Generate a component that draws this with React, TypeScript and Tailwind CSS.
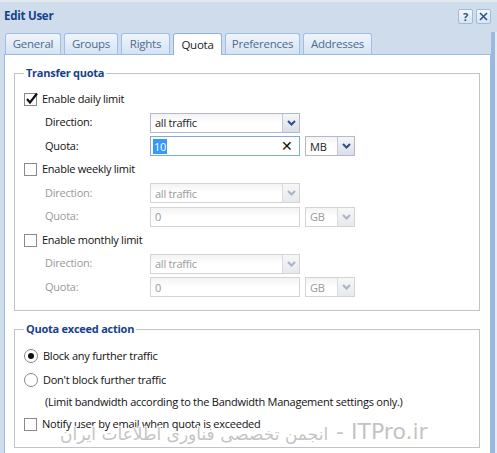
import React from "react";

const Chevron = ({ disabled }: { disabled?: boolean }) => (
  <svg width="9" height="6" viewBox="0 0 9 6">
    <path d="M1 1 L4.5 4.5 L8 1" fill="none" stroke={disabled ? "#a9b3c6" : "#2f4f86"} strokeWidth="2" />
  </svg>
);

const Trigger = ({ disabled }: { disabled?: boolean }) => (
  <div className={`w-[17px] h-full flex items-center justify-center border-l ${disabled ? "border-[#dcdcdc] bg-gradient-to-b from-[#f7f7f7] to-[#e6e9ee]" : "border-[#c4c7cf] bg-gradient-to-b from-[#f4f6fa] to-[#d9dfe8]"}`}>
    <Chevron disabled={disabled} />
  </div>
);

const Select = ({ value, w, disabled }: { value: string; w: string; disabled?: boolean }) => (
  <div className={`${w} h-[20px] flex border ${disabled ? "border-[#d4d4d4] text-[#9a9a9a]" : "border-[#b5b8c8] text-[#222]"} bg-gradient-to-b from-[#f3f3f3] via-white to-white`}>
    <div className="flex-1 flex items-center pl-[4px] leading-none">{value}</div>
    <Trigger disabled={disabled} />
  </div>
);

const Input = ({ value, w, disabled }: { value: string; w: string; disabled?: boolean }) => (
  <div className={`${w} h-[20px] flex items-center border ${disabled ? "border-[#d4d4d4] text-[#9a9a9a]" : "border-[#b5b8c8]"} bg-gradient-to-b from-[#f3f3f3] via-white to-white pl-[4px] leading-none`}>
    {value}
  </div>
);

const Checkbox = ({ checked }: { checked?: boolean }) => (
  <span className="relative inline-block w-[13px] h-[13px] border border-[#8a8a8a] bg-white shrink-0">
    {checked && (
      <svg className="absolute left-[0px] top-[-2px]" width="14" height="14" viewBox="0 0 14 14">
        <path d="M2 7 L5 10.5 L12 1.5" fill="none" stroke="#111" strokeWidth="2.2" />
      </svg>
    )}
  </span>
);

const Radio = ({ checked }: { checked?: boolean }) => (
  <span className="inline-flex items-center justify-center w-[14px] h-[14px] rounded-full border border-[#8a8a8a] bg-white shrink-0">
    {checked && <span className="w-[6px] h-[6px] rounded-full bg-[#111]" />}
  </span>
);

const CheckRow = ({ label, checked }: { label: string; checked?: boolean }) => (
  <div className="h-[20px] flex items-center gap-[5px] text-[#111]">
    <Checkbox checked={checked} />
    <span>{label}</span>
  </div>
);

const FieldRow = ({ label, disabled, children }: { label: string; disabled?: boolean; children: React.ReactNode }) => (
  <div className={`h-[20px] flex items-center ${disabled ? "text-[#9a9a9a]" : "text-[#111]"}`}>
    <div className="w-[126px] pl-[21px]">{label}</div>
    {children}
  </div>
);

const Limit = ({ label, checked, unit }: { label: string; checked?: boolean; unit: string }) => {
  const dis = !checked;
  return (
    <>
      <CheckRow label={label} checked={checked} />
      <FieldRow label="Direction:" disabled={dis}>
        <Select value="all traffic" w="w-[150px]" disabled={dis} />
      </FieldRow>
      <FieldRow label="Quota:" disabled={dis}>
        {checked ? (
          <div className="w-[150px] h-[20px] flex items-center border border-[#7eadd9] bg-white pl-[2px] pr-[6px] leading-none">
            <span className="bg-[#3399ff] text-white px-[1px] py-[2px]">10</span>
            <span className="ml-auto text-[14px] text-[#111]">✕</span>
          </div>
        ) : (
          <Input value="0" w="w-[150px]" disabled />
        )}
        <div className="ml-[5px]">
          <Select value={unit} w="w-[50px]" disabled={dis} />
        </div>
      </FieldRow>
    </>
  );
};

const tabs = [
  { t: "General", w: "w-[56px]" },
  { t: "Groups", w: "w-[54px]" },
  { t: "Rights", w: "w-[49px]" },
  { t: "Quota", w: "w-[49px]", active: true },
  { t: "Preferences", w: "w-[75px]" },
  { t: "Addresses", w: "w-[69px]" },
];

export default function App() {
  return (
    <div className="relative w-[497px] h-[453px] overflow-hidden bg-[#cfdcec] font-['Open_Sans',sans-serif] text-[11px] tracking-[-0.25px] flex flex-col">
      <div className="h-[2px] bg-[#e3e8ee] shrink-0" />
      <div className="h-[30px] flex items-center justify-between pl-[4px] pr-[6px] shrink-0">
        <span className="font-bold text-[#15428b] text-[11.5px] mt-[-2px]">Edit User</span>
        <div className="flex gap-[3px] mt-[-2px]">
          <span className="w-[15px] h-[15px] rounded-[2px] border border-[#9fbbe0] bg-gradient-to-b from-[#f5f8fc] to-[#d8e4f3] flex items-center justify-center text-[#2f5188] font-bold text-[11px] leading-none">?</span>
          <span className="w-[15px] h-[15px] rounded-[2px] border border-[#9fbbe0] bg-gradient-to-b from-[#f5f8fc] to-[#d8e4f3] flex items-center justify-center">
            <svg width="9" height="9" viewBox="0 0 9 9"><path d="M1 1 L8 8 M8 1 L1 8" stroke="#2f5188" strokeWidth="1.6" /></svg>
          </span>
        </div>
      </div>
      <div className="flex flex-1 min-h-0">
        <div className="w-[491px] flex flex-col pl-[4px]">
          <div className="flex gap-[3px] pl-[1px] h-[22px] items-end shrink-0">
            {tabs.map((tab) =>
              tab.active ? (
                <div key={tab.t} className={`${tab.w} h-[22px] mb-[-1px] relative z-10 rounded-t-[3px] border border-b-0 border-[#8db2e3] bg-white flex items-center justify-center text-[#222] text-[11.5px]`}>
                  {tab.t}
                </div>
              ) : (
                <div key={tab.t} className={`${tab.w} h-[21px] rounded-t-[3px] border border-b-0 border-[#9fbde6] bg-gradient-to-b from-[#f0f5fb] to-[#d6e3f3] flex items-center justify-center text-[#4e6a91] text-[11.5px]`}>
                  {tab.t}
                </div>
              )
            )}
          </div>
          <div className="flex-1 bg-white border border-b-0 border-[#99bbe8] pt-[10px] pl-[9px] pr-[10px]">
            <fieldset className="border border-[#c0c3cc] px-[9px] pb-[13px]">
              <legend className="ml-[0px] px-[2px] font-bold text-[#15428b] leading-[16px]">Transfer quota</legend>
              <div className="pt-[8px] flex flex-col gap-[3.5px]">
                <Limit label="Enable daily limit" checked unit="MB" />
                <Limit label="Enable weekly limit" unit="GB" />
                <Limit label="Enable monthly limit" unit="GB" />
              </div>
            </fieldset>
            <fieldset className="mt-[10px] border border-[#c0c3cc] px-[9px] pb-[13px]">
              <legend className="px-[2px] font-bold text-[#15428b] leading-[16px]">Quota exceed action</legend>
              <div className="pt-[9px] flex flex-col text-[#111]">
                <div className="h-[20px] flex items-center gap-[5px]">
                  <Radio checked />
                  <span>Block any further traffic</span>
                </div>
                <div className="h-[20px] mt-[4px] flex items-center gap-[5px]">
                  <Radio />
                  <span>Don't block further traffic</span>
                </div>
                <div className="h-[20px] mt-[2px] flex items-center pl-[21px]">
                  (Limit bandwidth according to the Bandwidth Management settings only.)
                </div>
                <div className="h-[20px] mt-[2px] flex items-center gap-[5px]">
                  <Checkbox />
                  <span>Notify user by email when quota is exceeded</span>
                </div>
              </div>
            </fieldset>
          </div>
        </div>
        <div className="w-[4px] bg-[#9ab8e0]" />
        <div className="w-[2px] bg-[#e6ecf4]" />
      </div>
      <div
        className="absolute left-[60px] top-[421px] flex items-end gap-[8px] text-[#c4c4c4] font-['DejaVu_Sans',sans-serif] tracking-normal leading-none pointer-events-none whitespace-nowrap"
        style={{ textShadow: "1px 1px 0 #ffffff, -1px -1px 0 #ffffff, 1px -1px 0 #ffffff, -1px 1px 0 #ffffff" }}
      >
        <span dir="rtl" className="text-[17px]">انجمن تخصصی فناوری اطلاعات ایران</span>
        <span className="text-[22px]">- ITPro.ir</span>
      </div>
    </div>
  );
}
